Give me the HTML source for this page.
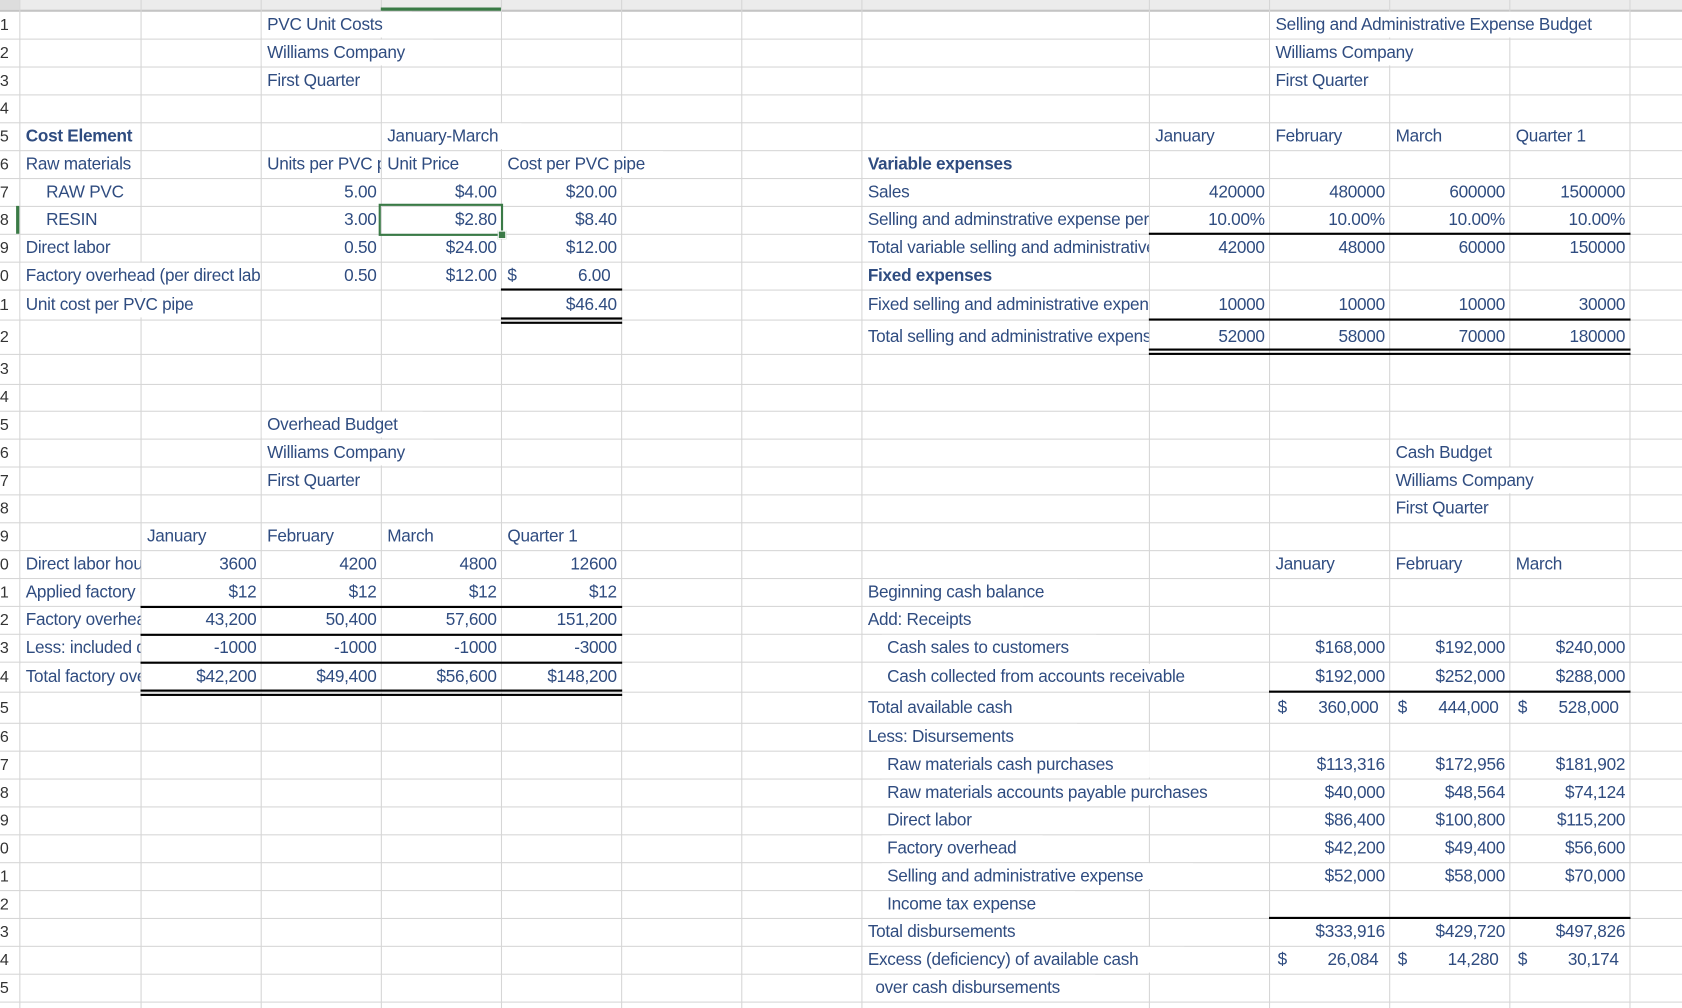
<!DOCTYPE html>
<html><head><meta charset="utf-8"><style>
html,body{margin:0;padding:0;background:#fff;overflow:hidden}
body{width:1682px;height:1008px}
#s{position:absolute;left:0;top:0;width:1568px;height:940px;transform:scale(1.0727,1.07234);transform-origin:0 0;font-family:"Liberation Sans",Arial,sans-serif;font-size:16px;color:#2f4c80;letter-spacing:-0.25px}
.h{position:absolute;left:0;width:1568px;height:1px;background:#d6d6d6}
.v{position:absolute;top:0;width:1px;height:940px;background:#d6d6d6}
.c{position:absolute;height:24px;line-height:26px;white-space:nowrap;overflow:hidden;padding-left:5px;box-sizing:border-box}
.r{text-align:right;padding-left:0;padding-right:4px}
.w{background:#fff}
.b{font-weight:bold}
.k{position:absolute;background:#000;height:2px}
.rh{position:absolute;left:-30px;width:38px;text-align:right;height:24px;line-height:26px;color:#333;font-size:15px}
</style></head><body><div id="s">
<div style="position:absolute;left:0;top:0;width:1568px;height:9px;background:#ececec"></div>
<div class="h" style="top:9px;height:2px;background:#c4c4c4"></div>
<div class="h" style="top:36px"></div><div class="h" style="top:62px"></div><div class="h" style="top:88px"></div><div class="h" style="top:114px"></div><div class="h" style="top:140px"></div><div class="h" style="top:166px"></div><div class="h" style="top:192px"></div><div class="h" style="top:218px"></div><div class="h" style="top:244px"></div><div class="h" style="top:270px"></div><div class="h" style="top:298px"></div><div class="h" style="top:330px"></div><div class="h" style="top:358px"></div><div class="h" style="top:383px"></div><div class="h" style="top:409px"></div><div class="h" style="top:435px"></div><div class="h" style="top:461px"></div><div class="h" style="top:487px"></div><div class="h" style="top:513px"></div><div class="h" style="top:539px"></div><div class="h" style="top:565px"></div><div class="h" style="top:591px"></div><div class="h" style="top:617px"></div><div class="h" style="top:645px"></div><div class="h" style="top:674px"></div><div class="h" style="top:700px"></div><div class="h" style="top:726px"></div><div class="h" style="top:752px"></div><div class="h" style="top:778px"></div><div class="h" style="top:804px"></div><div class="h" style="top:830px"></div><div class="h" style="top:856px"></div><div class="h" style="top:882px"></div><div class="h" style="top:908px"></div><div class="h" style="top:934px"></div>
<div class="v" style="left:18px"></div><div class="v" style="left:131px"></div><div class="v" style="left:243px"></div><div class="v" style="left:355px"></div><div class="v" style="left:467px"></div><div class="v" style="left:579px"></div><div class="v" style="left:691px"></div><div class="v" style="left:803px"></div><div class="v" style="left:1071px"></div><div class="v" style="left:1183px"></div><div class="v" style="left:1295px"></div><div class="v" style="left:1407px"></div><div class="v" style="left:1519px"></div>
<div style="position:absolute;left:0;top:0;width:18px;height:9px;background:#ddd"></div>
<div style="position:absolute;left:355px;top:7px;width:112px;height:3px;background:#3a7a46"></div>
<div style="position:absolute;left:15px;top:192px;width:3px;height:26px;background:#3a7a46"></div>

<div class="rh" style="top:11px">1</div><div class="rh" style="top:37px">2</div><div class="rh" style="top:63px">3</div><div class="rh" style="top:89px">4</div><div class="rh" style="top:115px">5</div><div class="rh" style="top:141px">6</div><div class="rh" style="top:167px">7</div><div class="rh" style="top:193px">8</div><div class="rh" style="top:219px">9</div><div class="rh" style="top:245px">10</div><div class="rh" style="top:272px">11</div><div class="rh" style="top:302px">12</div><div class="rh" style="top:332px">13</div><div class="rh" style="top:358px">14</div><div class="rh" style="top:384px">15</div><div class="rh" style="top:410px">16</div><div class="rh" style="top:436px">17</div><div class="rh" style="top:462px">18</div><div class="rh" style="top:488px">19</div><div class="rh" style="top:514px">20</div><div class="rh" style="top:540px">21</div><div class="rh" style="top:566px">22</div><div class="rh" style="top:592px">23</div><div class="rh" style="top:619px">24</div><div class="rh" style="top:648px">25</div><div class="rh" style="top:675px">26</div><div class="rh" style="top:701px">27</div><div class="rh" style="top:727px">28</div><div class="rh" style="top:753px">29</div><div class="rh" style="top:779px">30</div><div class="rh" style="top:805px">31</div><div class="rh" style="top:831px">32</div><div class="rh" style="top:857px">33</div><div class="rh" style="top:883px">34</div><div class="rh" style="top:909px">35</div>

<div class="c w" style="left:244px;top:11px;width:140px">PVC Unit Costs</div>
<div class="c w" style="left:244px;top:37px;width:160px">Williams Company</div>
<div class="c" style="left:244px;top:63px;width:111px">First Quarter</div>
<div class="c b" style="left:19px;top:115px;width:112px">Cost Element</div>
<div class="c w" style="left:356px;top:115px;width:130px">January-March</div>
<div class="c" style="left:19px;top:141px;width:112px">Raw materials</div>
<div class="c" style="left:244px;top:141px;width:111px">Units per PVC pipe</div>
<div class="c" style="left:356px;top:141px;width:111px">Unit Price</div>
<div class="c w" style="left:468px;top:141px;width:150px">Cost per PVC pipe</div>
<div class="c" style="left:38px;top:167px;width:93px">RAW PVC</div>
<div class="c r" style="left:244px;top:167px;width:111px">5.00</div>
<div class="c r" style="left:356px;top:167px;width:111px">$4.00</div>
<div class="c r" style="left:468px;top:167px;width:111px">$20.00</div>
<div class="c" style="left:38px;top:193px;width:93px">RESIN</div>
<div class="c r" style="left:244px;top:193px;width:111px">3.00</div>
<div class="c r" style="left:356px;top:193px;width:111px">$2.80</div>
<div class="c r" style="left:468px;top:193px;width:111px">$8.40</div>
<div class="c" style="left:19px;top:219px;width:112px">Direct labor</div>
<div class="c r" style="left:244px;top:219px;width:111px">0.50</div>
<div class="c r" style="left:356px;top:219px;width:111px">$24.00</div>
<div class="c r" style="left:468px;top:219px;width:111px">$12.00</div>
<div class="c w" style="left:19px;top:245px;width:224px">Factory overhead (per direct labor hour)</div>
<div class="c r" style="left:244px;top:245px;width:111px">0.50</div>
<div class="c r" style="left:356px;top:245px;width:111px">$12.00</div>
<div class="c" style="left:468px;top:245px;width:40px">$</div>
<div class="c r" style="left:468px;top:245px;width:111px;padding-right:10px">6.00</div>
<div class="c w" style="left:19px;top:272px;width:200px">Unit cost per PVC pipe</div>
<div class="c r" style="left:468px;top:272px;width:111px">$46.40</div>
<div class="k" style="left:467px;top:269px;width:113px"></div>
<div class="k" style="left:467px;top:296px;width:113px"></div>
<div class="k" style="left:467px;top:300px;width:113px"></div>
<div style="position:absolute;left:353px;top:190px;border:2px solid #3a7a46;box-sizing:border-box;width:116px;height:30px"></div>
<div style="position:absolute;left:464px;top:215px;width:6px;height:6px;background:#3a7a46;border:1px solid #fff"></div>

<div class="c w" style="left:1184px;top:11px;width:335px">Selling and Administrative Expense Budget</div>
<div class="c w" style="left:1184px;top:37px;width:160px">Williams Company</div>
<div class="c" style="left:1184px;top:63px;width:111px">First Quarter</div>
<div class="c" style="left:1072px;top:115px;width:111px">January</div>
<div class="c" style="left:1184px;top:115px;width:111px">February</div>
<div class="c" style="left:1296px;top:115px;width:111px">March</div>
<div class="c" style="left:1408px;top:115px;width:111px">Quarter 1</div>
<div class="c b w" style="left:804px;top:141px;width:267px">Variable expenses</div>
<div class="c w" style="left:804px;top:167px;width:267px">Sales</div>
<div class="c r" style="left:1072px;top:167px;width:111px">420000</div>
<div class="c r" style="left:1184px;top:167px;width:111px">480000</div>
<div class="c r" style="left:1296px;top:167px;width:111px">600000</div>
<div class="c r" style="left:1408px;top:167px;width:111px">1500000</div>
<div class="c w" style="left:804px;top:193px;width:267px">Selling and adminstrative expense percentage</div>
<div class="c r" style="left:1072px;top:193px;width:111px">10.00%</div>
<div class="c r" style="left:1184px;top:193px;width:111px">10.00%</div>
<div class="c r" style="left:1296px;top:193px;width:111px">10.00%</div>
<div class="c r" style="left:1408px;top:193px;width:111px">10.00%</div>
<div class="k" style="left:1071px;top:217px;width:449px"></div>
<div class="c w" style="left:804px;top:219px;width:267px">Total variable selling and administrative expenses</div>
<div class="c r" style="left:1072px;top:219px;width:111px">42000</div>
<div class="c r" style="left:1184px;top:219px;width:111px">48000</div>
<div class="c r" style="left:1296px;top:219px;width:111px">60000</div>
<div class="c r" style="left:1408px;top:219px;width:111px">150000</div>
<div class="c b w" style="left:804px;top:245px;width:267px">Fixed expenses</div>
<div class="c w" style="left:804px;top:272px;width:267px">Fixed selling and administrative expenses</div>
<div class="c r" style="left:1072px;top:272px;width:111px">10000</div>
<div class="c r" style="left:1184px;top:272px;width:111px">10000</div>
<div class="c r" style="left:1296px;top:272px;width:111px">10000</div>
<div class="c r" style="left:1408px;top:272px;width:111px">30000</div>
<div class="k" style="left:1071px;top:297px;width:449px"></div>
<div class="c w" style="left:804px;top:302px;width:267px">Total selling and administrative expenses</div>
<div class="c r" style="left:1072px;top:302px;width:111px">52000</div>
<div class="c r" style="left:1184px;top:302px;width:111px">58000</div>
<div class="c r" style="left:1296px;top:302px;width:111px">70000</div>
<div class="c r" style="left:1408px;top:302px;width:111px">180000</div>
<div class="k" style="left:1071px;top:325px;width:449px"></div>
<div class="k" style="left:1071px;top:329px;width:449px"></div>

<div class="c w" style="left:244px;top:384px;width:150px">Overhead Budget</div>
<div class="c w" style="left:244px;top:410px;width:160px">Williams Company</div>
<div class="c" style="left:244px;top:436px;width:111px">First Quarter</div>
<div class="c" style="left:132px;top:488px;width:111px">January</div>
<div class="c" style="left:244px;top:488px;width:111px">February</div>
<div class="c" style="left:356px;top:488px;width:111px">March</div>
<div class="c" style="left:468px;top:488px;width:111px">Quarter 1</div>
<div class="c w" style="left:19px;top:514px;width:112px">Direct labor hours</div>
<div class="c r" style="left:132px;top:514px;width:111px">3600</div>
<div class="c r" style="left:244px;top:514px;width:111px">4200</div>
<div class="c r" style="left:356px;top:514px;width:111px">4800</div>
<div class="c r" style="left:468px;top:514px;width:111px">12600</div>
<div class="c w" style="left:19px;top:540px;width:112px">Applied factory overhead rate</div>
<div class="c r" style="left:132px;top:540px;width:111px">$12</div>
<div class="c r" style="left:244px;top:540px;width:111px">$12</div>
<div class="c r" style="left:356px;top:540px;width:111px">$12</div>
<div class="c r" style="left:468px;top:540px;width:111px">$12</div>
<div class="k" style="left:131px;top:565px;width:449px"></div>
<div class="c w" style="left:19px;top:566px;width:112px">Factory overhead</div>
<div class="c r" style="left:132px;top:566px;width:111px">43,200</div>
<div class="c r" style="left:244px;top:566px;width:111px">50,400</div>
<div class="c r" style="left:356px;top:566px;width:111px">57,600</div>
<div class="c r" style="left:468px;top:566px;width:111px">151,200</div>
<div class="k" style="left:131px;top:591px;width:449px"></div>
<div class="c w" style="left:19px;top:592px;width:112px">Less: included depreciation</div>
<div class="c r" style="left:132px;top:592px;width:111px">-1000</div>
<div class="c r" style="left:244px;top:592px;width:111px">-1000</div>
<div class="c r" style="left:356px;top:592px;width:111px">-1000</div>
<div class="c r" style="left:468px;top:592px;width:111px">-3000</div>
<div class="k" style="left:131px;top:617px;width:449px"></div>
<div class="c w" style="left:19px;top:619px;width:112px">Total factory overhead</div>
<div class="c r" style="left:132px;top:619px;width:111px">$42,200</div>
<div class="c r" style="left:244px;top:619px;width:111px">$49,400</div>
<div class="c r" style="left:356px;top:619px;width:111px">$56,600</div>
<div class="c r" style="left:468px;top:619px;width:111px">$148,200</div>
<div class="k" style="left:131px;top:643px;width:449px"></div>
<div class="k" style="left:131px;top:647px;width:449px"></div>

<div class="c w" style="left:1296px;top:410px;width:111px">Cash Budget</div>
<div class="c w" style="left:1296px;top:436px;width:160px">Williams Company</div>
<div class="c" style="left:1296px;top:462px;width:111px">First Quarter</div>
<div class="c" style="left:1184px;top:514px;width:111px">January</div>
<div class="c" style="left:1296px;top:514px;width:111px">February</div>
<div class="c" style="left:1408px;top:514px;width:111px">March</div>
<div class="c w" style="left:804px;top:540px;width:200px">Beginning cash balance</div>
<div class="c w" style="left:804px;top:566px;width:150px">Add: Receipts</div>
<div class="c w" style="left:822px;top:592px;width:200px">Cash sales to customers</div>
<div class="c r" style="left:1184px;top:592px;width:111px">$168,000</div>
<div class="c r" style="left:1296px;top:592px;width:111px">$192,000</div>
<div class="c r" style="left:1408px;top:592px;width:111px">$240,000</div>
<div class="c w" style="left:822px;top:619px;width:320px">Cash collected from accounts receivable</div>
<div class="c r" style="left:1184px;top:619px;width:111px">$192,000</div>
<div class="c r" style="left:1296px;top:619px;width:111px">$252,000</div>
<div class="c r" style="left:1408px;top:619px;width:111px">$288,000</div>
<div class="k" style="left:1183px;top:644px;width:337px"></div>
<div class="c w" style="left:804px;top:648px;width:200px">Total available cash</div>
<div class="c" style="left:1186px;top:648px;width:30px">$</div>
<div class="c r" style="left:1184px;top:648px;width:111px;padding-right:10px">360,000</div>
<div class="c" style="left:1298px;top:648px;width:30px">$</div>
<div class="c r" style="left:1296px;top:648px;width:111px;padding-right:10px">444,000</div>
<div class="c" style="left:1410px;top:648px;width:30px">$</div>
<div class="c r" style="left:1408px;top:648px;width:111px;padding-right:10px">528,000</div>
<div class="c w" style="left:804px;top:675px;width:200px">Less: Disursements</div>
<div class="c w" style="left:822px;top:701px;width:250px">Raw materials cash purchases</div>
<div class="c w" style="left:822px;top:727px;width:355px">Raw materials accounts payable purchases</div>
<div class="c r" style="left:1184px;top:701px;width:111px">$113,316</div>
<div class="c r" style="left:1296px;top:701px;width:111px">$172,956</div>
<div class="c r" style="left:1408px;top:701px;width:111px">$181,902</div>
<div class="c r" style="left:1184px;top:727px;width:111px">$40,000</div>
<div class="c r" style="left:1296px;top:727px;width:111px">$48,564</div>
<div class="c r" style="left:1408px;top:727px;width:111px">$74,124</div>
<div class="c w" style="left:822px;top:753px;width:150px">Direct labor</div>
<div class="c r" style="left:1184px;top:753px;width:111px">$86,400</div>
<div class="c r" style="left:1296px;top:753px;width:111px">$100,800</div>
<div class="c r" style="left:1408px;top:753px;width:111px">$115,200</div>
<div class="c w" style="left:822px;top:779px;width:150px">Factory overhead</div>
<div class="c r" style="left:1184px;top:779px;width:111px">$42,200</div>
<div class="c r" style="left:1296px;top:779px;width:111px">$49,400</div>
<div class="c r" style="left:1408px;top:779px;width:111px">$56,600</div>
<div class="c w" style="left:822px;top:805px;width:290px">Selling and administrative expense</div>
<div class="c r" style="left:1184px;top:805px;width:111px">$52,000</div>
<div class="c r" style="left:1296px;top:805px;width:111px">$58,000</div>
<div class="c r" style="left:1408px;top:805px;width:111px">$70,000</div>
<div class="c w" style="left:822px;top:831px;width:180px">Income tax expense</div>
<div class="k" style="left:1183px;top:855px;width:337px"></div>
<div class="c w" style="left:804px;top:857px;width:180px">Total disbursements</div>
<div class="c r" style="left:1184px;top:857px;width:111px">$333,916</div>
<div class="c r" style="left:1296px;top:857px;width:111px">$429,720</div>
<div class="c r" style="left:1408px;top:857px;width:111px">$497,826</div>
<div class="c w" style="left:804px;top:883px;width:300px">Excess (deficiency) of available cash</div>
<div class="c" style="left:1186px;top:883px;width:30px">$</div>
<div class="c r" style="left:1184px;top:883px;width:111px;padding-right:10px">26,084</div>
<div class="c" style="left:1298px;top:883px;width:30px">$</div>
<div class="c r" style="left:1296px;top:883px;width:111px;padding-right:10px">14,280</div>
<div class="c" style="left:1410px;top:883px;width:30px">$</div>
<div class="c r" style="left:1408px;top:883px;width:111px;padding-right:10px">30,174</div>
<div class="c w" style="left:811px;top:909px;width:210px">over cash disbursements</div>
</div></body></html>
